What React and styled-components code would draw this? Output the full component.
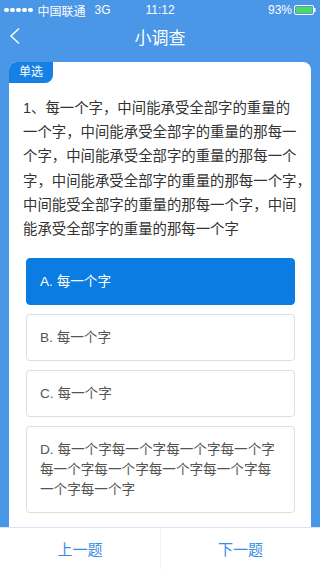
import React from 'react';
import styled, { createGlobalStyle } from 'styled-components';

const GlobalStyle = createGlobalStyle`
  html, body, #root { margin: 0; padding: 0; height: 100%; }
  body {
    font-family: 'Liberation Sans', 'Noto Sans CJK SC', sans-serif;
    background: #4a96e7;
    -webkit-font-smoothing: antialiased;
  }
`;

const Page = styled.div`
  height: 569px;
  display: flex;
  flex-direction: column;
  background: #4a96e7;
  overflow: hidden;
`;

const StatusBar = styled.div`
  height: 20px;
  display: grid;
  grid-template-columns: 1fr auto 1fr;
  align-items: center;
  padding: 0 4px;
  color: #fff;
  font-size: 12px;
`;

const StatusLeft = styled.div`
  display: flex;
  align-items: center;
  gap: 5px;
`;

const Dots = styled.div`
  display: flex;
  gap: 1.5px;
  span {
    width: 4.5px;
    height: 4.5px;
    border-radius: 50%;
    background: #fff;
  }
`;

const Carrier = styled.span`
  margin-right: 4px;
`;

const StatusRight = styled.div`
  display: flex;
  justify-content: flex-end;
  align-items: center;
  gap: 2px;
`;

const NavBar = styled.div`
  height: 32px;
  display: flex;
  align-items: center;
  justify-content: center;
  position: relative;
  color: #fff;
  font-size: 17px;
`;

const BackButton = styled.button`
  position: absolute;
  left: 8px;
  top: 7px;
  background: none;
  border: none;
  padding: 0;
  display: flex;
`;

const Scroll = styled.div`
  flex: 1;
  overflow: hidden;
  padding: 10px 9px 0;
`;

const Card = styled.div`
  background: #fff;
  border-radius: 8px;
  padding-bottom: 30px;
`;

const Tag = styled.div`
  display: inline-block;
  background: #1780e4;
  color: #fff;
  font-size: 12px;
  line-height: 21px;
  padding: 0 10px;
  border-radius: 8px 0 8px 0;
`;

const Question = styled.p`
  margin: 13px 10px 0 14px;
  font-size: 14.4px;
  line-height: 24.2px;
  color: #333;
`;

// the app hangs a closing comma past the line end, so lines are kept as laid out
const QuestionLine = styled.span`
  display: block;
  white-space: nowrap;
`;

const Options = styled.div`
  display: flex;
  flex-direction: column;
  gap: 9px;
  padding: 17px 16px 0 17px;
`;

const Option = styled.div`
  padding: 12.5px 12px 12.5px 13px;
  font-size: 13.6px;
  line-height: 20px;
  border-radius: 4px;
  border: 1px solid ${p => (p.$active ? '#0a7ce2' : '#dedede')};
  background: ${p => (p.$active ? '#0a7ce2' : '#fff')};
  color: ${p => (p.$active ? '#fff' : '#555')};
`;

const Footer = styled.div`
  height: 41px;
  display: grid;
  grid-template-columns: 1fr 1fr;
  background: #fff;
  border-top: 1px solid #d5e5f5;
`;

const FooterButton = styled.button`
  background: none;
  border: none;
  border-left: ${p => (p.$divider ? '1px solid #f2f2f2' : 'none')};
  font-family: inherit;
  font-size: 15px;
  color: #3a8de4;
  padding: 0;
`;

function Battery() {
  return (
    <svg width="22" height="10" viewBox="0 0 22 10">
      <rect x="0.5" y="0.5" width="19" height="9" rx="1.5" fill="none" stroke="#fff" />
      <rect x="2" y="2" width="16" height="6" fill="#4cd964" />
      <rect x="20" y="3" width="1.5" height="4" fill="#fff" />
    </svg>
  );
}

const questionLines = [
  '1、每一个字，中间能承受全部字的重量的',
  '一个字，中间能承受全部字的重量的那每一',
  '个字，中间能承受全部字的重量的那每一个',
  '字，中间能承受全部字的重量的那每一个字，',
  '中间能受全部字的重量的那每一个字，中间',
  '能承受全部字的重量的那每一个字',
];

const options = [
  { key: 'A', text: '每一个字', active: true },
  { key: 'B', text: '每一个字' },
  { key: 'C', text: '每一个字' },
  { key: 'D', text: '每一个字每一个字每一个字每一个字每一个字每一个字每一个字每一个字每一个字每一个字' },
];

export default function App() {
  return (
    <Page>
      <GlobalStyle />
      <StatusBar>
        <StatusLeft>
          <Dots>
            <span /><span /><span /><span /><span />
          </Dots>
          <Carrier>中国联通</Carrier>
          <span>3G</span>
        </StatusLeft>
        <span>11:12</span>
        <StatusRight>
          <span>93%</span>
          <Battery />
        </StatusRight>
      </StatusBar>
      <NavBar>
        <BackButton aria-label="返回">
          <svg width="14" height="18" viewBox="0 0 14 18">
            <path d="M11 1.5 L3 9 L11 16.5" fill="none" stroke="#fff" strokeWidth="1.5" />
          </svg>
        </BackButton>
        小调查
      </NavBar>
      <Scroll>
        <Card>
          <Tag>单选</Tag>
          <Question>
            {questionLines.map(line => (
              <QuestionLine key={line}>{line}</QuestionLine>
            ))}
          </Question>
          <Options>
            {options.map(o => (
              <Option key={o.key} $active={o.active}>
                {o.key}. {o.text}
              </Option>
            ))}
          </Options>
        </Card>
      </Scroll>
      <Footer>
        <FooterButton>上一题</FooterButton>
        <FooterButton $divider>下一题</FooterButton>
      </Footer>
    </Page>
  );
}
